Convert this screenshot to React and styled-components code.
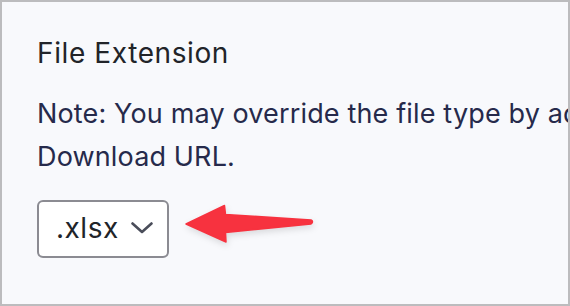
import React from 'react'
import styled, { createGlobalStyle } from 'styled-components'

const GlobalStyle = createGlobalStyle`
  html, body {
    margin: 0;
    padding: 0;
  }
  body {
    font-family: Inter, "Noto Sans", sans-serif;
  }
`

const Frame = styled.div`
  box-sizing: border-box;
  width: 570px;
  height: 306px;
  border: 2px solid #bcbcbe;
  background: #f8f9fc;
  padding: 34px 0 0 35px;
  overflow: hidden;
`

const Title = styled.h3`
  margin: 0;
  font-size: 28px;
  line-height: 34px;
  font-weight: 400;
  letter-spacing: 0.6px;
  color: #212429;
  white-space: nowrap;
`

const Note = styled.p`
  margin: 22px 0 0;
  font-size: 27px;
  line-height: 43px;
  letter-spacing: 0.15px;
  color: #262a4b;
  white-space: nowrap;
`

const Row = styled.div`
  display: flex;
  align-items: flex-start;
  gap: 16px;
  margin-top: 22px;
`

const Select = styled.div`
  box-sizing: border-box;
  width: 132px;
  height: 58px;
  border: 2px solid #8b8b92;
  border-radius: 6px;
  background: #fff;
  display: flex;
  align-items: center;
  gap: 12px;
  padding: 0 0 2px 17px;
  font-size: 28px;
  letter-spacing: 0.5px;
  color: #212429;
`

const Arrow = styled.svg`
  display: block;
  margin-top: 5px;
  overflow: visible;
  filter: drop-shadow(1px 3px 3px rgba(0, 0, 0, 0.12));
`

function Chevron() {
  return (
    <svg width="22" height="12" viewBox="0 0 22 12" fill="none">
      <path d="M1.5 1.5 L11 10 L20.5 1.5" stroke="#4a4d5a" strokeWidth="2.6" strokeLinecap="round" strokeLinejoin="round" />
    </svg>
  )
}

export default function App() {
  return (
    <>
      <GlobalStyle />
      <Frame>
        <Title>File Extension</Title>
        <Note>
          Note: You may override the file type by adding an extension to the
          <br />
          Download URL.
        </Note>
        <Row>
          <Select>
            .xlsx
            <Chevron />
          </Select>
          <Arrow width="130" height="38" viewBox="0 0 130 38">
            <path
              d="M1 19 L39.5 0.5 L40.5 9.5 L126 15 Q129 16.5 126 19 L40.5 27.5 L41 37 Z"
              fill="#f7323f"
              stroke="#f7323f"
              strokeWidth="1.5"
              strokeLinejoin="round"
            />
          </Arrow>
        </Row>
      </Frame>
    </>
  )
}
